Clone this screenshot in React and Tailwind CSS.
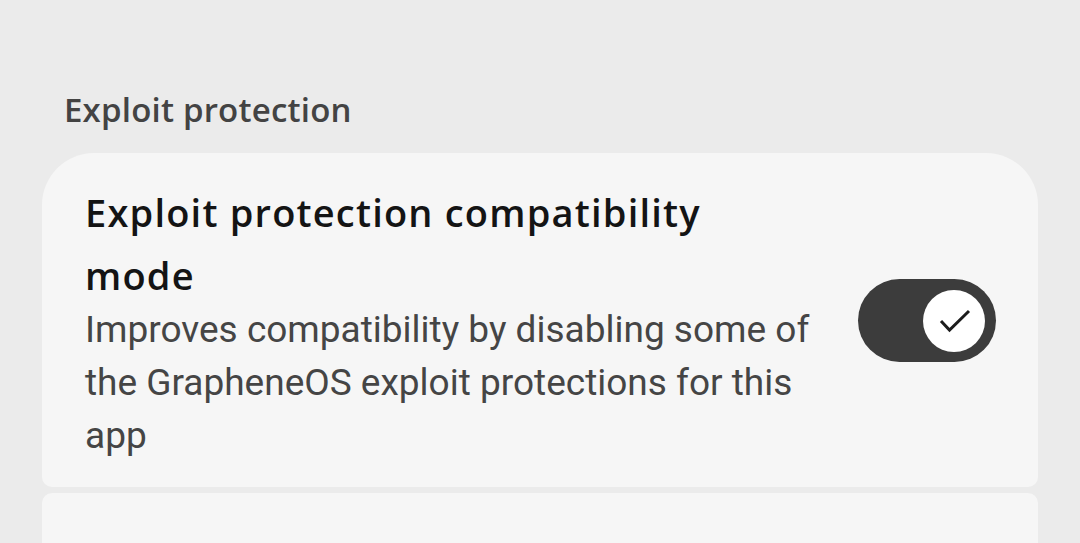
export default function App() {
  return (
    <div className="w-[1080px] h-[543px] overflow-hidden bg-[#ebebeb] font-['Roboto',sans-serif]">
      <div className="pt-[88px] pl-[64px] h-[153px]">
        <h2 className="text-[33px] leading-[44px] font-semibold text-[#434343] font-['Open_Sans',sans-serif] tracking-[0.2px]">Exploit protection</h2>
      </div>
      <div className="mx-[42px] flex flex-col gap-[6px]">
        <div className="bg-[#f6f6f6] rounded-t-[52px] rounded-b-[10px] h-[334px] pl-[43px] pr-[42px] pt-[28px] flex items-start">
          <div className="w-[740px]">
            <div className="text-[38px] leading-[63px] font-semibold text-[#141414] font-['Open_Sans',sans-serif] tracking-[1.2px] pr-[60px]">
              Exploit protection compatibility mode
            </div>
            <div className="text-[37px] leading-[53px] text-[#454545] -mt-[4px]">
              Improves compatibility by disabling some of the GrapheneOS exploit protections for this app
            </div>
          </div>
          <div className="ml-auto mt-[98px] w-[138px] h-[83px] rounded-full bg-[#3c3c3c] flex items-center justify-end pr-[11px]">
            <div className="w-[62px] h-[62px] rounded-full bg-white">
              <svg width="62" height="62" viewBox="0 0 62 62" fill="none" stroke="#1c1c1c" strokeWidth="3">
                <path d="M18 31l8.5 9L46 21" />
              </svg>
            </div>
          </div>
        </div>
        <div className="bg-[#f6f6f6] rounded-t-[10px] h-[60px]"></div>
      </div>
    </div>
  );
}
